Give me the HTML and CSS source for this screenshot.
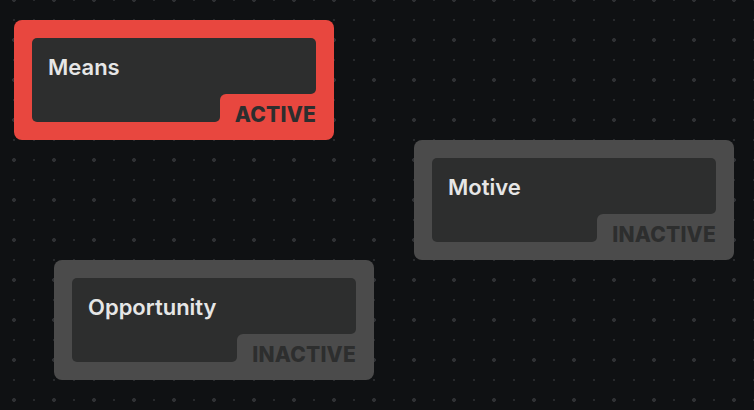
FILE: index.html
```html
<!DOCTYPE html>
<html lang="en">
<head>
    <meta charset="UTF-8">
    <meta name="viewport" content="width=device-width, initial-scale=1.0">
    <title>Means, Motive, Opportunity</title>
    <link rel="stylesheet" href="styles.css">
</head>
<body>
    <div class="canvas">
        <div class="node node-active node-means">
            <div class="node-body">
                <div class="node-head">Means</div>
                <div class="node-foot">
                    <div class="node-fill"></div>
                    <div class="node-tag">ACTIVE</div>
                </div>
            </div>
        </div>

        <div class="node node-motive">
            <div class="node-body">
                <div class="node-head">Motive</div>
                <div class="node-foot">
                    <div class="node-fill"></div>
                    <div class="node-tag">INACTIVE</div>
                </div>
            </div>
        </div>

        <div class="node node-opportunity">
            <div class="node-body">
                <div class="node-head">Opportunity</div>
                <div class="node-foot">
                    <div class="node-fill"></div>
                    <div class="node-tag">INACTIVE</div>
                </div>
            </div>
        </div>
    </div>
</body>
</html>
```

FILE: styles.css
```css
/* Canvas */
body {
    margin: 0;
    padding: 0;
    font-family: Inter, "Noto Sans", sans-serif;
    background: #0f1113;
}

/* dot grid: small dots every 20px, bigger ones every 40px */
.canvas {
    position: relative;
    width: 754px;
    height: 410px;
    overflow: hidden;
    background-color: #0f1113;
    background-image:
        radial-gradient(circle, #2f3134 1.7px, transparent 2.2px),
        radial-gradient(circle, #27292c 0.9px, transparent 1.4px);
    background-size: 40px 40px, 20px 20px;
    background-position: -6px -20px, 4px -10px;
}

/* Nodes */
.node {
    position: absolute;
    width: 320px;
    height: 120px;
    box-sizing: border-box;
    padding: 18px;
    border-radius: 8px;
    background: #4b4b4b;
}

.node-active {
    background: #e8473f;
}

.node-means { left: 14px; top: 20px; }
.node-motive { left: 414px; top: 140px; }
.node-opportunity { left: 54px; top: 260px; }

.node-body {
    display: flex;
    flex-direction: column;
    height: 84px;
}

.node-head {
    height: 56px;
    box-sizing: border-box;
    padding: 16px 16px 0;
    background: #2d2e2e;
    border-radius: 5px 5px 5px 0;
    color: #e6e6e6;
    font-size: 22px;
    font-weight: 600;
    line-height: 26px;
}

.node-foot {
    flex: 1;
    display: flex;
    background: linear-gradient(#2d2e2e, #2d2e2e) top / 100% 8px no-repeat;
}

.node-fill {
    flex: 1;
    background: #2d2e2e;
    border-radius: 0 0 5px 5px;
}

.node-tag {
    height: 28px;
    box-sizing: border-box;
    padding: 10px 0 0 15px;
    background: #4b4b4b;
    border-top-left-radius: 6px;
    color: #2d2e2e;
    font-size: 21px;
    font-weight: 800;
    line-height: 21px;
    letter-spacing: 0.2px;
    white-space: nowrap;
}

.node-active .node-tag {
    background: #e8473f;
}
```
